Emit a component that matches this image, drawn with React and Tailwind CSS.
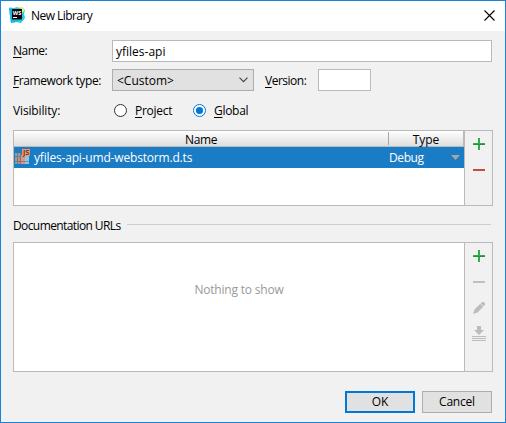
import React from "react";

const U = ({ children }) => (
  <span className="underline decoration-1 underline-offset-2">{children}</span>
);

const Plus = () => (
  <svg width="12" height="12" shapeRendering="crispEdges">
    <path d="M5 0h2v5h5v2H7v5H5V7H0V5h5z" fill="#35a852" />
    <path d="M0 6h12v1H0z" fill="#1f9440" />
  </svg>
);

const AppIcon = () => (
  <svg className="block" width="16" height="16" viewBox="0 0 16 16">
    <path d="M0 .5 5 1 8 0H13L16 3 15 7 16 11 12 16 7 15 2 16 1 9z" fill="#22cde6" />
    <path d="M7 0H13L16 3 13 6V2z" fill="#eaf07c" />
    <path d="M0 1 3 2v11h8l-4 2-5 1z" fill="#22b4e0" />
    <path d="M3 2h10v10.500H3z" fill="#080808" />
    <text x="3.800" y="7.800" fontSize="5.500" fontWeight="700" fill="#fff" textLength="8.500" lengthAdjust="spacingAndGlyphs">WS</text>
    <path d="M4 10h4v1H4z" fill="#fff" />
  </svg>
);

const LibraryIcon = () => (
  <svg className="block" width="16" height="16" viewBox="0 0 16 16" shapeRendering="crispEdges">
    <path d="M0 4h6v11H0z" fill="#9b9b9b" />
    <path d="M6 6h4v9H6z" fill="#e89088" />
    <path d="M10 7h4v8h-4z" fill="#8ac8e4" />
    <path d="M0 7h6v1H0zM0 12h6v1H0zM2 4h1v11H2zM5 4h1v11H5z" fill="#77797b" />
    <path d="M6 12h4v1H6z" fill="#c0655f" />
    <path d="M10 12h4v1h-4z" fill="#5c9db9" />
    <path d="M7 0h8v7H7z" fill="#f4936a" />
    <text x="8" y="6" fontSize="6.500" fontWeight="600" fill="#40302b" textLength="6.300" lengthAdjust="spacingAndGlyphs">JS</text>
  </svg>
);

const Radio = ({ on }) => (
  <svg width="13" height="13" viewBox="0 0 13 13">
    <circle cx="6.5" cy="6.5" r="6" fill="#fff" stroke={on ? "#0078d7" : "#333"} />
    {on && <circle cx="6.5" cy="6.5" r="3.6" fill="#0078d7" />}
  </svg>
);

export default function App() {
  return (
    <div className="flex h-[423px] w-[506px] flex-col overflow-hidden border border-[#1883d7] bg-[#f1f1f1] font-['Open_Sans','Noto_Sans',sans-serif] text-[12px] leading-[16px] whitespace-nowrap text-black">
      <header className="flex h-[30px] shrink-0 items-center bg-white pr-[10px] pl-[8px]">
        <span className="mb-[2px]"><AppIcon /></span>
        <span className="ml-[6px] tracking-[-0.55px]">New Library</span>
        <svg className="mb-[1px] ml-auto" width="11" height="11" viewBox="0 0 11 11">
          <path d="M.5.5l10 10M10.5.5l-10 10" stroke="#000" strokeWidth="1.1" />
        </svg>
      </header>

      <main className="flex flex-col pr-[12px] pl-[12px]">
        <div className="mt-[9px] flex h-[22px] items-center">
          <label className="w-[99px] tracking-[-0.5px]"><U>N</U>ame:</label>
          <div className="flex h-[22px] w-[380px] items-center border border-[#bababa] bg-white pt-[1px] pl-[3px]">yfiles-api</div>
        </div>

        <div className="mt-[7px] flex h-[22px] items-center">
          <label className="w-[99px] pt-[1px] tracking-[-0.4px]"><U>F</U>ramework type:</label>
          <div className="flex h-[22px] w-[142px] items-center justify-between border border-[#adadad] bg-[#e1e1e1] pr-[5px] pl-[4px]">
            <span className="pt-[1px]">&lt;Custom&gt;</span>
            <svg width="9" height="6" viewBox="0 0 9 6">
              <path d="M.5.7l4 4 4-4" fill="none" stroke="#404040" strokeWidth="1.1" />
            </svg>
          </div>
          <label className="ml-[11px] w-[53px] pt-[1px] tracking-[-0.5px]"><U>V</U>ersion:</label>
          <div className="h-[22px] w-[53px] border border-[#bababa] bg-white" />
        </div>

        <div className="mt-[9px] flex h-[21px] items-center">
          <span className="w-[101px] pt-[1px] tracking-[-0.15px]">Visibility:</span>
          <Radio />
          <span className="ml-[8px] w-[58px] tracking-[-0.25px]"><U>P</U>roject</span>
          <Radio on />
          <span className="ml-[8px] tracking-[-0.3px]"><U>G</U>lobal</span>
        </div>

        <section className="mt-[9px] flex h-[76px] w-[480px] border border-[#bababa]">
          <div className="w-[450px] bg-white">
            <div className="flex h-[16px] border-b border-[#bababa] bg-linear-to-b from-white to-[#dedede] text-center leading-[18px]">
              <div className="w-[374px] tracking-[-0.4px]">Name</div>
              <div className="my-[1px] h-[13px] w-px bg-[#a8a8a8]" />
              <div className="grow border-r border-[#bababa]">Type</div>
            </div>
            <div className="flex h-[21px] items-center bg-[#1a7cc4] text-white">
              <span className="mb-[1px] ml-[1px]"><LibraryIcon /></span>
              <span className="ml-[3px] w-[355px] tracking-[-0.18px]">yfiles-api-umd-webstorm.d.ts</span>
              <span className="tracking-[-0.4px]">Debug</span>
              <svg className="mr-[4px] ml-auto" width="9" height="5"><path d="M0 0h9L4.500 5z" fill="#a5a5a5" /></svg>
            </div>
          </div>
          <div className="flex grow flex-col items-center border-l border-[#bababa] pt-[7px]">
            <Plus />
            <div className="mt-[19px] h-[2px] w-[12px] bg-[#c64b3f]" />
          </div>
        </section>

        <div className="mt-[12px] flex h-[16px] items-center">
          <span className="w-[114px] tracking-[-0.6px]">Documentation URLs</span>
          <div className="mb-[3px] h-px w-[364px] bg-[#cdcdcd]" />
        </div>

        <section className="mt-[8px] flex h-[130px] w-[480px] border border-[#bababa]">
          <div className="flex w-[450px] justify-center bg-white pt-[39px] tracking-[-0.2px] text-[#999]">Nothing to show</div>
          <div className="flex grow flex-col items-center border-l border-[#bababa] pt-[7px]">
            <Plus />
            <div className="mt-[19px] h-[2px] w-[12px] bg-[#bfbfbf]" />
            <svg className="mt-[19px]" width="12" height="12" viewBox="0 0 12 12">
              <path d="M0 12 1.500 7.500 7.300 1.800 10.200 4.700 4.500 10.500zM7.700 1.400 9.200 0h1.600l1.200 1.200v1.600L10.600 4.300z" fill="#bcbcbc" />
            </svg>
            <svg className="mt-[12px]" width="14" height="15" viewBox="0 0 14 15">
              <path d="M5 0h4v4h3L7 9 2 4h3z" fill="#bcbcbc" />
              <path d="M0 10h14v1H0zM0 12h14v1H0zM0 14h14v1H0z" fill="#bcbcbc" />
            </svg>
          </div>
        </section>

        <footer className="mt-[19px] flex justify-end gap-[7px] pr-[1px]">
          <button className="h-[22px] w-[70px] border-2 border-[#0078d7] bg-[#e1e1e1]">OK</button>
          <button className="h-[22px] w-[70px] border border-[#adadad] bg-[#e1e1e1] tracking-[-0.2px]">Cancel</button>
        </footer>
      </main>
    </div>
  );
}
